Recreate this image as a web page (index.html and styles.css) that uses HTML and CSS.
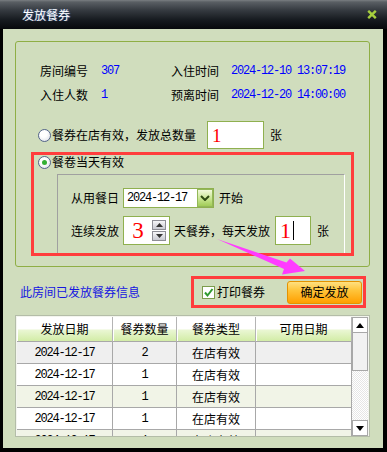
FILE: index.html
```html
<!DOCTYPE html>
<html>
<head>
<meta charset="utf-8">
<link rel="stylesheet" href="styles.css">
</head>
<body>
<div class="win">
  <div class="titlebar">
    <span class="title">发放餐券</span>
    <svg class="close" width="10" height="9" viewBox="0 0 10 9"><path d="M1.2 0.8 L8.8 8.2 M8.8 0.8 L1.2 8.2" stroke="#a6cf3e" stroke-width="2.4" fill="none"/></svg>
  </div>
  <div class="main">
    <div class="group">
      <div class="info">
        <div class="info-row"><span class="lbl">房间编号</span><span class="val">307</span><span class="lbl2">入住时间</span><span class="val2">2024-12-10 13:07:19</span></div>
        <div class="info-row"><span class="lbl">入住人数</span><span class="val">1</span><span class="lbl2">预离时间</span><span class="val2">2024-12-20 14:00:00</span></div>
      </div>
      <div class="opt1">
        <span class="radio"></span><span class="otext">餐券在店有效，发放总数量</span>
        <span class="box num1">1</span><span class="unit">张</span>
      </div>
      <div class="redbox">
        <div class="opt2"><span class="radio on"></span><span class="otext">餐卷当天有效</span></div>
        <div class="inner">
          <div class="irow r1">
            <span>从用餐日</span>
            <span class="combo"><span class="ctext">2024-12-17</span><span class="drop"><svg width="10" height="6" viewBox="0 0 10 6"><path d="M1 1 L5 5 L9 1" stroke="#2f4a12" stroke-width="2" fill="none"/></svg></span></span>
            <span class="after">开始</span>
          </div>
          <div class="irow r2">
            <span>连续发放</span>
            <span class="box spin"><span class="spinval">3</span><span class="spinbtns"><span class="sb"><svg width="7" height="4" viewBox="0 0 7 4"><path d="M0 4 L3.5 0 L7 4Z" fill="#333"/></svg></span><span class="sb"><svg width="7" height="4" viewBox="0 0 7 4"><path d="M0 0 L3.5 4 L7 0Z" fill="#333"/></svg></span></span></span>
            <span class="mid">天餐券，每天发放</span>
            <span class="box num2"><span class="n2">1</span><span class="caret"></span></span>
            <span class="unit">张</span>
          </div>
        </div>
      </div>
    </div>
    <div class="actions">
      <span class="hist">此房间已发放餐券信息</span>
      <div class="redbox2">
        <span class="check"><svg width="11" height="11" viewBox="0 0 11 11"><path d="M2 5.5 L4.5 8.5 L9.5 2" stroke="#2e9a2e" stroke-width="2" fill="none"/></svg></span>
        <span class="clabel">打印餐券</span>
        <span class="btn">确定发放</span>
      </div>
    </div>
    <div class="tablewrap">
      <div class="grid">
        <div class="hd">发放日期</div><div class="hd">餐券数量</div><div class="hd">餐券类型</div><div class="hd">可用日期</div>
        <div class="c g m">2024-12-17</div><div class="c g m">2</div><div class="c g">在店有效</div><div class="c g"></div>
        <div class="c w m">2024-12-17</div><div class="c w m">1</div><div class="c w">在店有效</div><div class="c w"></div>
        <div class="c l m">2024-12-17</div><div class="c l m">1</div><div class="c l">在店有效</div><div class="c l"></div>
        <div class="c w m">2024-12-17</div><div class="c w m">1</div><div class="c w">在店有效</div><div class="c w"></div>
        <div class="c l m">2024-12-17</div><div class="c l m">1</div><div class="c l">在店有效</div><div class="c l"></div>
      </div>
      <div class="scroll">
        <span class="sbtn"><svg width="8" height="5" viewBox="0 0 8 5"><path d="M0 5 L4 0 L8 5Z" fill="#000"/></svg></span>
        <span class="thumb"></span>
        <span class="track"></span>
        <span class="sbtn"><svg width="8" height="5" viewBox="0 0 8 5"><path d="M0 0 L4 5 L8 0Z" fill="#000"/></svg></span>
      </div>
    </div>
  </div>
  <svg class="arrow" width="387" height="452" viewBox="0 0 387 452"><polygon points="217,239 286.5,262.5 290,258.5 305,271 282,274.5 284,269" fill="#ff3cff"/></svg>
</div>
</body>
</html>
```

FILE: styles.css
```css
* { box-sizing: border-box; margin: 0; padding: 0; }
html, body { width: 387px; height: 452px; background: #000; overflow: hidden; }
body { font-family: "Noto Sans CJK SC", "Noto Sans", sans-serif; font-size: 12px; color: #000; line-height: 1; }

.win { position: relative; width: 387px; height: 452px; background: #000; }

.titlebar {
  height: 29px;
  display: flex; align-items: center; justify-content: space-between;
  padding: 0 10px 0 22px;
  background: linear-gradient(#7a7e82 0, #5a5f64 2px, #363b41 10px, #161a1f 20px, #07090c 29px);
}
.title { color: #fff; font-size: 12px; text-shadow: 1px 0 1px rgba(90,140,230,0.7); }
.close { display: block; }

.main {
  margin: 0 4px 0 3px; height: 419px;
  background: #d0ddbd;
  padding: 12px 13px 0 12px;
}

.group { border: 1px solid #8fae45; border-radius: 3px; height: 226px; padding-top: 17px; }
.info { padding-left: 24px; }
.info-row { display: flex; align-items: center; height: 24px; }
.lbl { width: 61px; }
.lbl2 { width: 60px; }
.mono, .val, .val2, .ctext, .c.m { font-family: "Liberation Mono", monospace; font-size: 12px; letter-spacing: -1.2px; }
.val { width: 70px; color: #0000ff; }
.val2 { color: #0000ff; }

.opt1 { margin-top: 14px; height: 28px; display: flex; align-items: center; padding-left: 22px; }
.radio {
  width: 13px; height: 13px; border-radius: 50%;
  border: 1px solid #53648a;
  background: radial-gradient(circle at 40% 35%, #fff 0, #fff 35%, #d5d9e2 100%);
  display: flex; align-items: center; justify-content: center;
  margin-right: 1px; flex: none;
}
.radio.on::after { content: ""; width: 5px; height: 5px; border-radius: 50%; background: #33b033; }
.box { background: #fff; border: 1px solid #8fb04f; display: flex; align-items: center; }
.num1 { margin-left: 11px; width: 57px; height: 28px; padding-left: 4px; color: #ff0000; font-family: "Liberation Serif", serif; font-size: 19px; }
.unit { margin-left: 6px; }

.redbox { margin: 3px 0 0 15px; width: 323px; height: 104px; border: 3px solid #ff3d3d; }
.opt2 { height: 14px; display: flex; align-items: center; padding-left: 4px; }
.inner {
  margin: 5px 6px 0 23px; height: 79px;
  border-top: 1px solid #a0a0a0; border-left: 1px solid #a0a0a0; border-right: 1px solid #fff;
  padding: 13px 0 0 13px;
}
.irow { display: flex; align-items: center; }
.r1 { height: 20px; }
.r2 { height: 29px; margin-top: 8px; }
.combo {
  margin-left: 4px; width: 91px; height: 20px;
  background: #fff; border: 1px solid #8fb04f;
  display: flex; align-items: center; justify-content: space-between;
  padding: 0 0 0 3px;
}
.drop {
  width: 16px; height: 18px;
  background: linear-gradient(#f2f9dc, #c4e38a 60%, #a2cc58);
  border: 1px solid #93b858;
  display: flex; align-items: center; justify-content: center;
}
.after { margin-left: 5px; }
.spin { margin-left: 4px; width: 47px; height: 29px; justify-content: space-between; padding: 0 3px 0 0; }
.spinval { width: 30px; text-align: center; color: #ff0000; font-family: "Liberation Serif", serif; font-size: 23px; line-height: 1; }
.spinbtns { display: flex; flex-direction: column; gap: 1px; }
.sb {
  width: 14px; height: 10px; border: 1px solid #8e8e96;
  background: linear-gradient(#f6f6f8, #c9cad2);
  display: flex; align-items: center; justify-content: center;
}
.mid { margin-left: 4px; }
.num2 { margin-left: 5px; width: 36px; height: 29px; padding-left: 4px; }
.n2 { color: #ff0000; font-family: "Liberation Serif", serif; font-size: 22px; }
.caret { width: 1px; height: 19px; background: #000; margin-left: 2px; }

.actions { margin-top: 9px; height: 32px; display: flex; align-items: center; padding-left: 5px; }
.hist { color: #1515e0; }
.redbox2 {
  margin-left: auto; margin-right: 4px; width: 175px; height: 32px;
  border: 3px solid #ff3d3d;
  display: flex; align-items: center; padding: 0 1px 0 8px;
}
.check { width: 13px; height: 13px; border: 1px solid #7c9c4c; background: #fff; display: flex; align-items: center; justify-content: center; }
.clabel { margin-left: 2px; }
.btn {
  margin-left: auto; width: 75px; height: 23px;
  border: 1px solid #e49200; border-radius: 3px;
  background: linear-gradient(#ffe080 0, #ffc43a 40%, #ff9f00 100%);
  display: flex; align-items: center; justify-content: center;
}

.tablewrap {
  margin-top: 7px; height: 122px;
  border: 1px solid #b4bda8;
  background: #f3f5ee;
  padding: 1px 1px 0 1px;
  display: flex;
}
.grid {
  width: 335px; height: 119px; overflow: hidden;
  display: grid; grid-template-columns: 96px 64px 79px 96px;
  grid-auto-rows: 22px; grid-template-rows: 25px;
  background: #fff;
}
.hd {
  display: flex; align-items: center; justify-content: center;
  background: linear-gradient(#fff 0, #fff 48%, #e9f6d2 56%, #d2eca6 100%);
  border-right: 1px solid #b4b4b4; border-bottom: 1px solid #a8a8a8;
  box-shadow: inset 1px 0 #fff;
}
.c {
  display: flex; align-items: center; justify-content: center;
  border-right: 1px solid #a8a8a8; border-bottom: 1px solid #a8a8a8;
}
.g { background: #efefef; }
.w { background: #fff; }
.l { background: #f1f4e7; }

.scroll { width: 16px; height: 119px; display: flex; flex-direction: column; background: #fff; }
.sbtn { height: 16px; border: 1px solid #a8a8a8; background: #fff; display: flex; align-items: center; justify-content: center; flex: none; }
.thumb { height: 38px; border: 1px solid #a8a8a8; border-top: none; background: #f2f2f2; flex: none; }
.track { flex: 1; background: repeating-conic-gradient(#e6e6e6 0 25%, #fff 0 50%) 0 0 / 2px 2px; }

.arrow { position: absolute; left: 0; top: 0; pointer-events: none; }
```
